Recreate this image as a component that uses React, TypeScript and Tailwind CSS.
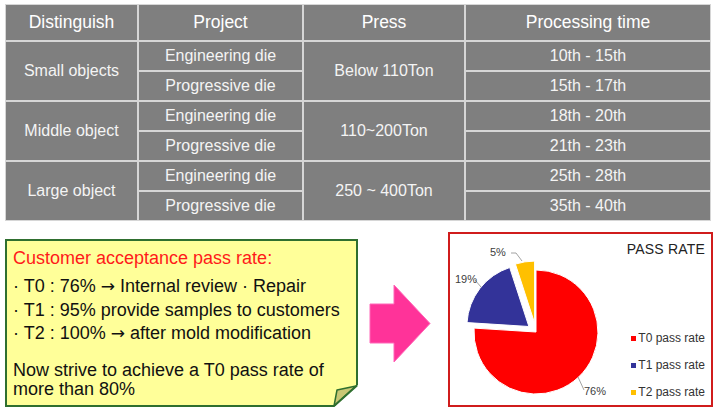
const rows = [
  { group: "Small objects", press: "Below 110Ton", items: [["Engineering die", "10th - 15th"], ["Progressive die", "15th - 17th"]] },
  { group: "Middle object", press: "110~200Ton", items: [["Engineering die", "18th - 20th"], ["Progressive die", "21th - 23th"]] },
  { group: "Large object", press: "250 ~ 400Ton", items: [["Engineering die", "25th - 28th"], ["Progressive die", "35th - 40th"]] },
];

const cell = "bg-[#7f7f7f] flex items-center justify-center text-[#f4f4f4] text-[16px]";

function Arr() {
  return <span className="font-['DejaVu_Sans',sans-serif] text-[17px]">→</span>;
}

function SpecTable() {
  return (
    <div className="grid grid-cols-[131px_163px_160px_244px] grid-rows-[35px_repeat(6,28px)] gap-[2px] border border-[#d6d6d6] bg-[#d6d6d6] w-[706px]">
      {["Distinguish", "Project", "Press", "Processing time"].map((h) => (
        <div key={h} className="bg-[#7f7f7f] flex items-center justify-center text-white text-[17.5px]">
          {h}
        </div>
      ))}
      {rows.map((r) => (
        <>
          <div key={r.group} className={`${cell} row-span-2`}>{r.group}</div>
          <div className={cell}>{r.items[0][0]}</div>
          <div className={`${cell} row-span-2`}>{r.press}</div>
          <div className={cell}>{r.items[0][1]}</div>
          <div className={cell}>{r.items[1][0]}</div>
          <div className={cell}>{r.items[1][1]}</div>
        </>
      ))}
    </div>
  );
}

function NoteBox() {
  return (
    <div className="relative mt-[7px] w-[353px] h-[168px] border-2 border-[#2f6f2f] bg-[#ffff99] px-[6px] pt-[7px] text-[18px] text-[#111]">
      <p className="text-[#ff1a1a] leading-[21px]">Customer acceptance pass rate:</p>
      <div className="mt-[6px] leading-[23.5px]">
        <p>· T0 : 76% <Arr /> Internal review · Repair</p>
        <p>· T1 : 95% provide samples to customers</p>
        <p>· T2 : 100% <Arr /> after mold modification</p>
      </div>
      <p className="mt-[15px] leading-[19px]">
        Now strive to achieve a T0 pass rate of more than 80%
      </p>
      {/* folded corner */}
      <svg className="absolute -right-[2px] -bottom-[2px]" width="28" height="24" viewBox="0 0 28 24">
        <polygon points="4,24 28,24 28,2" fill="#ffffff" />
        <polygon points="4,23 7,7 26,3" fill="#c9c774" stroke="#2f6f2f" strokeWidth="1.5" strokeLinejoin="round" />
        <line x1="4" y1="23" x2="27" y2="2.5" stroke="#2f6f2f" strokeWidth="2" />
      </svg>
    </div>
  );
}

function Arrow() {
  return (
    <svg width="62" height="80" viewBox="0 0 62 80" className="mt-[52px] ml-[11px] mr-[17px]">
      <polygon points="1,20 25,20 25,1 61,39.5 25,78 25,59 1,59" fill="#ff3399" stroke="#ff66b8" strokeWidth="1" />
    </svg>
  );
}

function PieChart() {
  return (
    <div className="relative w-[265px] h-[175px] border-2 border-[#d01c1c] bg-white flex">
      <svg width="170" height="171" viewBox="0 0 170 171" className="shrink-0">
        <path d="M86,98 L86,36 A62,62 0 1 1 24.1,94.1 Z" fill="#ff0000" stroke="#fff" strokeWidth="1" />
        <path d="M78.9,92.5 L17,88.6 A62,62 0 0 1 59.7,33.5 Z" fill="#333399" stroke="#fff" strokeWidth="1" />
        <path d="M84.6,89.1 L65.4,30.1 A62,62 0 0 1 84.6,27.1 Z" fill="#ffc000" stroke="#fff" strokeWidth="1" />
        <g stroke="#8a8a8a" strokeWidth="0.8" fill="none">
          <polyline points="61,19 66,19 72,27" />
          <polyline points="25,46 31,53" />
          <polyline points="128,143 134,156" />
        </g>
        <g fontFamily="'Liberation Sans', Arial, sans-serif" fontSize="11" fill="#404040">
          <text x="40" y="22">5%</text>
          <text x="5" y="49">19%</text>
          <text x="134" y="161">76%</text>
        </g>
      </svg>
      <div className="flex-1 flex flex-col items-end pr-[6px] pt-[7px]">
        <p className="text-[14px] leading-[16px] text-[#222] tracking-[0.2px]">PASS RATE</p>
        <div className="mt-auto mb-[6px] flex flex-col gap-[13px] text-[12px] leading-[14px] text-[#333]">
          {[
            ["#ff0000", "T0 pass rate"],
            ["#333399", "T1 pass rate"],
            ["#ffc000", "T2 pass rate"],
          ].map(([c, t]) => (
            <div key={t} className="flex items-center gap-[2px]">
              <span className="w-[5px] h-[5px]" style={{ backgroundColor: c }} />
              <span>{t}</span>
            </div>
          ))}
        </div>
      </div>
    </div>
  );
}

export default function App() {
  return (
    <div className="w-[720px] h-[411px] bg-white pl-[5px] pt-[4px] font-['Liberation_Sans',Arial,sans-serif] overflow-hidden">
      <SpecTable />
      <div className="flex items-start mt-[11px]">
        <NoteBox />
        <Arrow />
        <PieChart />
      </div>
    </div>
  );
}
